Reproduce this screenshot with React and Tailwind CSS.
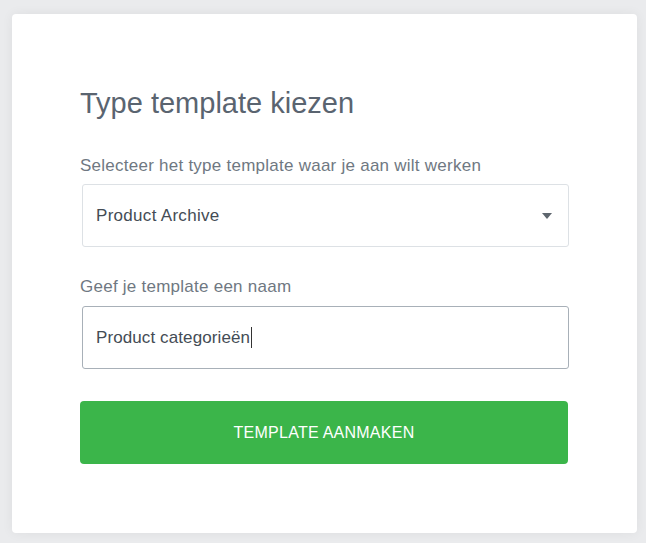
const App = () => {
  return (
    <div
      className="min-h-[543px] bg-[#eaebed] px-3 pt-[14px] pb-[11px]"
      style={{ fontFamily: '"Liberation Sans", Arial, sans-serif' }}
    >
      <div className="w-[625px] rounded bg-white px-[68px] pt-[72px] pb-[69px] shadow-[0_0_12px_rgba(0,0,0,0.06)]">
        {/* Heading */}
        <h1 className="text-[29px] leading-[34px] text-[#5a6470] mb-[34px]">
          Type template kiezen
        </h1>

        {/* Template type */}
        <label className="block text-[17px] leading-6 tracking-[0.25px] text-[#6f7882] mb-[6px]">
          Selecteer het type template waar je aan wilt werken
        </label>
        <div className="ml-[2px] flex h-[63px] items-center justify-between rounded-[3px] border border-[#dde1e5] pl-[13px] pr-[16px]">
          <span className="text-[17px] tracking-[0.3px] text-[#444c55]">Product Archive</span>
          <svg width="10" height="6" viewBox="0 0 10 6">
            <path d="M0 0h10L5 6z" fill="#5e666e" />
          </svg>
        </div>

        {/* Template name */}
        <label className="mt-[28px] block text-[17px] leading-6 tracking-[0.25px] text-[#6f7882] mb-[7px]">
          Geef je template een naam
        </label>
        <div className="ml-[2px] flex h-[63px] items-center rounded-[3px] border border-[#a8b0b8] pl-[13px]">
          <span className="text-[17px] tracking-[0.1px] text-[#444c55]">Product categorieën</span>
          <span className="ml-[1px] h-[21px] w-px bg-[#333]" />
        </div>

        {/* Submit */}
        <button className="mt-[32px] flex h-[63px] w-[488px] items-center justify-center rounded bg-[#3bb54a] text-base tracking-[0.25px] text-white">
          TEMPLATE AANMAKEN
        </button>
      </div>
    </div>
  );
};

export default App;
